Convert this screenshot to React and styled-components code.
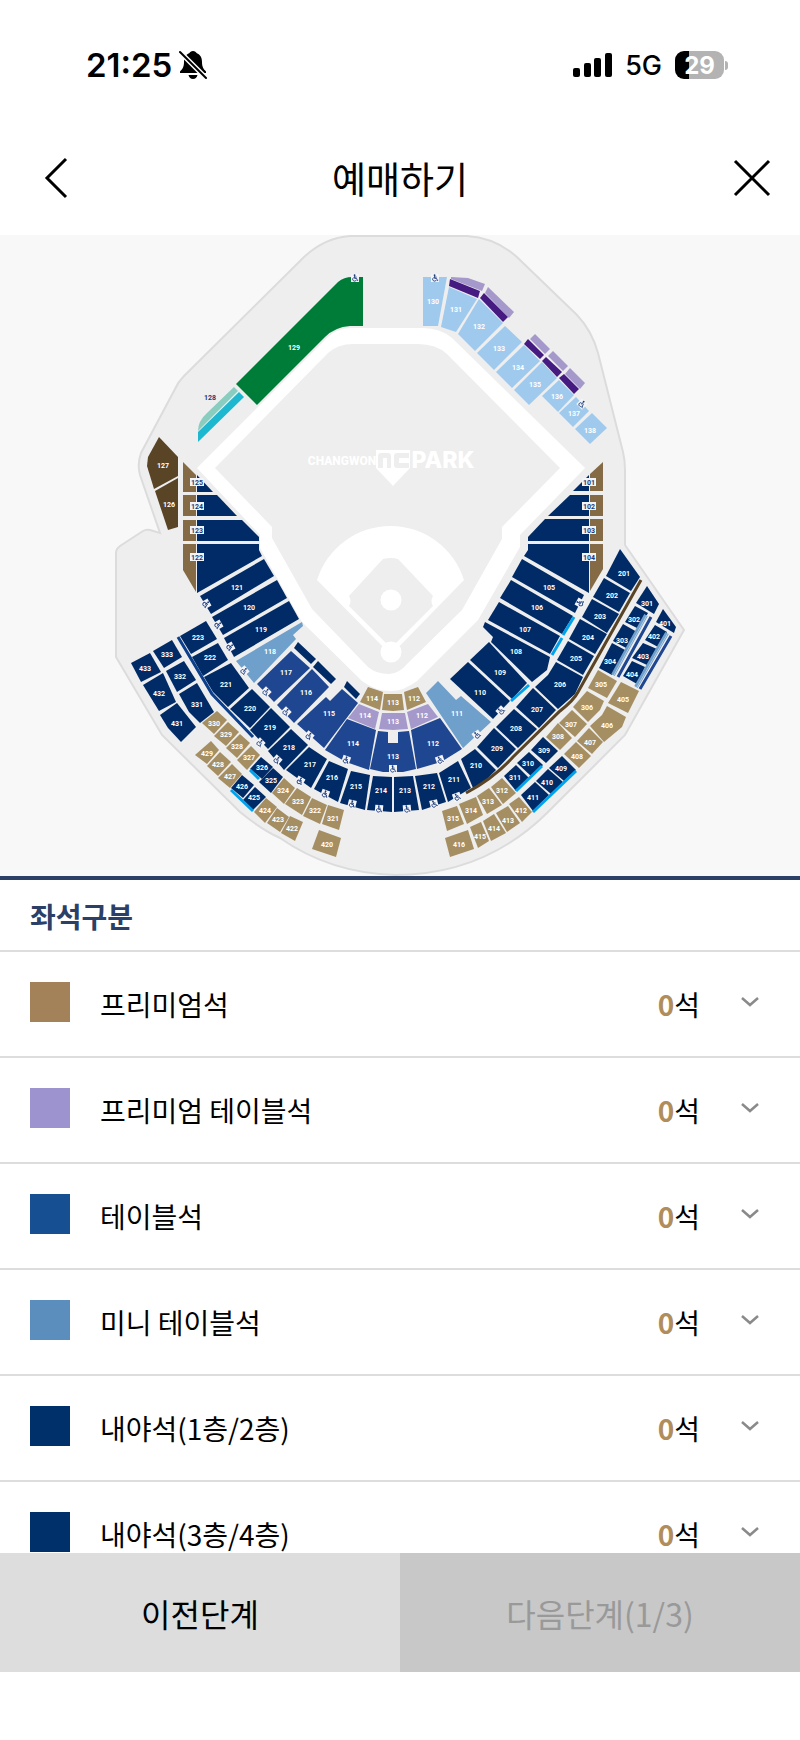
import React, { useState } from 'react';
import styled, { createGlobalStyle } from 'styled-components';

const GlobalStyle = createGlobalStyle`
  * {
    box-sizing: border-box;
  }

  body {
    margin: 0;
    background-color: #fff;
    color: #000;
    font-family: "Noto Sans CJK KR", sans-serif;
  }

  button {
    padding: 0;
    border: none;
    background: none;
    color: inherit;
    font-family: inherit;
    cursor: pointer;
  }
`;

const Page = styled.div`
  display: flex;
  flex-direction: column;
  height: 100vh;
`;

const StatusBar = styled.div`
  display: flex;
  flex-shrink: 0;
  align-items: center;
  justify-content: space-between;
  height: 120px;
  padding: 10px 72px 0 86px;
  font-family: Inter, sans-serif;
`;

const StatusGroup = styled.div`
  display: flex;
  align-items: center;
  gap: ${({ $gap }) => $gap}px;
`;

const Time = styled.span`
  font-size: 33px;
  font-weight: 600;
`;

const Network = styled.span`
  font-size: 27px;
  font-weight: 500;
`;

const Battery = styled.div`
  display: flex;
  align-items: center;
  justify-content: center;
  width: 49px;
  height: 28px;
  border-radius: 9px;
  background: linear-gradient(to right, #000 29%, #b3b3b3 29%);
  color: #fff;
  font-size: 24px;
  font-weight: 700;
`;

const BatteryBox = styled.div`
  display: flex;
  align-items: center;
  gap: 1px;
`;

const BatteryCap = styled.div`
  width: 3px;
  height: 9px;
  border-radius: 0 4px 4px 0;
  background-color: #b3b3b3;
`;

const Header = styled.header`
  display: flex;
  flex-shrink: 0;
  align-items: center;
  justify-content: space-between;
  height: 115px;
  padding: 0 24px;
`;

const Title = styled.h1`
  margin: 0;
  font-size: 37px;
  font-weight: 400;
  line-height: 48px;
`;

const IconButton = styled.button`
  display: flex;
  align-items: center;
  justify-content: center;
  width: 48px;
  height: 48px;
`;

const BackButton = styled(IconButton)`
  justify-content: flex-end;
  padding-right: 4px;
`;

const MapArea = styled.section`
  flex-shrink: 0;
  border-bottom: 4px solid #2c4067;
  background-color: #f8f8f8;
`;

const Stadium = styled.svg`
  display: block;
  width: 100%;

  text {
    font-family: Roboto, sans-serif;
    font-size: 7px;
    font-weight: 700;
    text-anchor: middle;
  }
`;

const LogoText = styled.text`
  && {
    fill: #fff;
    font-family: ${({ $family }) => $family}, sans-serif;
    font-size: ${({ $size }) => $size}px;
    font-weight: 800;
  }
`;

const SectionTitle = styled.h2`
  flex-shrink: 0;
  margin: 0;
  padding: 16px 30px 14px;
  border-bottom: 2px solid #ddd;
  color: #2c4067;
  font-size: 28px;
  font-weight: 700;
  line-height: 40px;
`;

const SeatList = styled.ul`
  flex: 1;
  min-height: 0;
  margin: 0;
  padding: 0;
  overflow-y: auto;
  scrollbar-width: none;
  list-style: none;
`;

const SeatItem = styled.li`
  border-bottom: 2px solid #ddd;
`;

const SeatRow = styled.button`
  display: flex;
  align-items: center;
  width: 100%;
  padding: 30px 40px 34px 30px;
  font-size: 28px;
  line-height: 40px;
  text-align: left;
`;

const Swatch = styled.span`
  width: 40px;
  height: 40px;
  margin-right: 30px;
  background-color: ${({ $color }) => $color};
`;

const SeatName = styled.span`
  flex: 1;
  padding-top: 4px;
  line-height: 36px;
`;

const SeatCount = styled.span`
  margin-right: 40px;
  padding-top: 4px;
  line-height: 36px;

  strong {
    color: #b08d5b;
    font-weight: 700;
  }
`;

const Footer = styled.footer`
  display: grid;
  flex-shrink: 0;
  grid-template-columns: 1fr 1fr;
  padding-bottom: 68px;
`;

const StepButton = styled.button`
  height: 119px;
  background-color: #ddd;
  font-size: 32px;
  font-weight: 400;

  &:disabled {
    background-color: #c8c8c8;
    color: #999;
    cursor: default;
  }
`;

const NAVY = '#002b66';
const BLUE = '#1f4690';
const LIGHT = '#6f9fcb';
const TAN = '#a58e62';
const BROWN = '#856b45';
const DARK_BROWN = '#5a4426';
const LILAC = '#a598ca';
const PURPLE = '#451b82';
const SKY = '#9fcaed';
const CYAN = '#00a2ed';

// [label, label x, label y, points]
const blocks = [
  {
    color: NAVY,
    items: [
      ['121', 237, 587, '264,559 274,576 211,614 200,596'],
      ['120', 249, 607, '277,580 287,598 223,635 212,617'],
      ['119', 261, 629, '289,601 299,619 234,657 224,638'],
      ['', 0, 0, '298,642 316,659 311,664 294,648'],
      ['', 0, 0, '318,661 336,679 331,684 313,667'],
      ['', 0, 0, '347,681 360,694 356,699 344,687'],
      ['', 0, 0, '197,475 213,492 197,492'],
      ['', 0, 0, '197,495 217,495 237,516 197,516'],
      ['', 0, 0, '197,520 242,520 259,537 259,541 197,541'],
      ['', 0, 0, '197,544 259,544 259,550 262,556 197,593'],
      ['', 0, 0, '589,475 589,491 573,491'],
      ['', 0, 0, '570,495 589,495 589,516 548,516'],
      ['', 0, 0, '545,519 589,519 589,541 528,541 528,537'],
      ['', 0, 0, '528,544 589,544 589,593 524,556 528,550'],
      ['105', 549, 587, '522,559 584,595 575,613 512,577'],
      ['106', 537, 607, '511,580 573,616 562,634 500,598'],
      ['107', 525, 629, '499,602 560,636 550,654 488,620'],
      ['108', 516, 651, '485,622 550,657 547,670 532,682 491,642 493,637 483,627'],
      ['109', 500, 672, '489,642 527,683 512,699 470,660'],
      ['110', 480, 692, '468,662 510,701 493,719 450,679'],
      ['201', 624, 573, '620,549 640,577 631,591 606,576'],
      ['202', 612, 595, '604,578 630,593 619,612 593,597'],
      ['203', 600, 616, '592,599 619,614 607,633 582,617'],
      ['204', 588, 637, '580,619 607,634 595,654 569,639'],
      ['205', 576, 658, '568,641 594,656 583,675 557,660'],
      ['206', 560, 684, '556,662 583,677 575,694 558,709 535,687 548,675'],
      ['207', 537, 709, '533,688 556,710 539,728 516,707'],
      ['208', 516, 728, '514,709 537,729 518,748 496,727'],
      ['209', 497, 748, '494,728 516,749 498,768 477,747'],
      ['210', 476, 765, '475,749 496,770 485,781 473,788 461,759'],
      ['211', 454, 779, '458,761 471,788 448,802 439,773'],
      ['212', 429, 786, '437,773 446,802 422,810 415,776'],
      ['213', 405, 790, '413,776 419,810 394,812 394,777'],
      ['214', 381, 790, '373,776 392,777 392,812 367,810'],
      ['215', 356, 786, '351,771 370,775 365,810 340,803'],
      ['216', 332, 777, '329,761 348,769 338,802 314,789'],
      ['217', 310, 764, '309,747 327,759 311,788 286,770'],
      ['218', 289, 747, '291,729 308,745 284,770 268,751'],
      ['219', 270, 727, '271,708 290,727 268,749 250,730'],
      ['220', 250, 708, '252,689 270,707 250,728 230,709'],
      ['221', 226, 684, '231,663 249,688 228,707 213,692 204,677'],
      ['222', 210, 657, '218,643 228,660 203,676 192,657'],
      ['223', 198, 637, '206,621 217,639 191,654 180,636'],
      ['333', 167, 654, '172,640 182,657 164,668 153,651'],
      ['332', 180, 676, '184,661 196,680 177,692 166,671'],
      ['331', 197, 704, '197,683 214,712 200,723 189,712 179,694'],
      ['433', 145, 668, '150,653 161,672 141,682 131,663'],
      ['432', 159, 693, '163,673 176,702 159,711 143,685'],
      ['431', 177, 723, '177,703 196,727 181,742 168,728 160,715'],
      ['326', 262, 767, '261,757 273,767 262,779 250,769'],
      ['325', 271, 780, '273,768 283,777 271,793 259,782'],
      ['426', 242, 786, '242,775 254,785 243,798 231,788'],
      ['425', 254, 797, '255,787 266,797 253,810 243,800'],
      ['301', 647, 603, '647,586 659,604 654,614 636,603'],
      ['302', 634, 619, '635,606 648,613 639,629 625,622'],
      ['303', 622, 640, '623,624 637,632 628,649 613,641'],
      ['304', 610, 661, '612,643 627,651 612,675 599,668'],
      ['401', 665, 623, '663,609 676,627 674,633 656,622'],
      ['402', 654, 636, '655,625 667,632 658,647 645,640'],
      ['403', 643, 656, '643,643 657,649 647,665 632,658'],
      ['404', 632, 674, '632,661 645,667 637,684 623,676'],
      ['309', 544, 750, '543,737 558,751 546,763 531,750'],
      ['310', 528, 763, '529,752 543,765 532,777 517,763'],
      ['311', 515, 777, '516,765 529,778 516,791 504,776'],
      ['409', 561, 768, '562,756 576,770 564,781 549,768'],
      ['410', 547, 782, '548,769 563,782 551,794 536,781'],
      ['411', 533, 797, '535,782 549,795 533,811 521,795'],
    ],
  },
  {
    color: BLUE,
    items: [
      ['117', 286, 672, '291,651 310,668 274,702 257,684'],
      ['116', 306, 692, '312,669 329,687 294,723 277,705'],
      ['115', 329, 713, '326,697 330,701 342,689 358,703 324,748 297,724'],
      ['114', 353, 743, '347,719 376,730 369,770 346,762 325,750'],
      ['113', 393, 756, '378,731 388,732 388,743 398,743 398,732 409,731 416,769 403,772 383,772 370,769'],
      ['112', 433, 743, '411,730 440,718 462,749 441,762 417,769'],
    ],
  },
  {
    color: LIGHT,
    items: [
      ['118', 270, 651, '302,622 303,626 293,635 296,639 254,683 236,661'],
      ['111', 457, 713, '438,681 456,700 461,696 491,722 463,748 426,693'],
    ],
  },
  {
    color: TAN,
    items: [
      ['114', 372, 698, '368,687 383,692 380,710 360,702'],
      ['113', 393, 702, '384,694 402,694 404,710 393,711 382,710'],
      ['112', 414, 698, '404,692 418,687 426,702 407,710'],
      ['330', 214, 723, '217,711 227,720 214,734 202,723'],
      ['329', 226, 734, '228,722 239,732 226,746 214,736'],
      ['328', 237, 746, '240,734 250,743 237,758 226,748'],
      ['327', 249, 757, '251,746 260,755 247,770 237,760'],
      ['324', 283, 790, '284,778 295,788 284,804 272,793'],
      ['323', 298, 801, '297,788 311,797 302,815 285,804'],
      ['322', 315, 810, '312,798 327,805 320,824 303,816'],
      ['321', 333, 818, '328,805 344,810 339,830 322,824'],
      ['429', 207, 753, '211,741 219,750 207,764 195,755'],
      ['428', 218, 764, '220,752 231,762 218,776 207,766'],
      ['427', 230, 776, '232,764 242,774 230,788 218,778'],
      ['424', 265, 810, '266,798 277,807 265,823 254,812'],
      ['423', 278, 819, '277,808 289,817 280,832 267,823'],
      ['422', 292, 828, '290,816 303,822 295,841 281,833'],
      ['420', 327, 844, '319,830 341,838 336,857 312,849'],
      ['305', 601, 684, '598,670 617,681 607,698 588,688'],
      ['306', 587, 707, '587,691 604,701 600,710 588,722 573,707'],
      ['307', 571, 724, '572,710 587,724 575,737 559,723'],
      ['308', 558, 736, '558,723 572,738 560,750 546,737'],
      ['312', 502, 790, '502,778 516,793 503,804 491,787'],
      ['313', 488, 801, '489,788 502,805 487,814 477,796'],
      ['314', 471, 810, '476,797 483,815 467,824 459,804'],
      ['315', 453, 818, '442,811 457,806 464,824 447,831'],
      ['405', 623, 699, '621,682 639,691 628,713 608,703'],
      ['406', 607, 725, '607,706 626,717 622,727 604,742 590,726 602,715'],
      ['407', 590, 742, '589,728 603,742 592,754 577,741'],
      ['408', 577, 756, '576,742 591,756 579,768 564,754'],
      ['412', 521, 810, '519,797 532,812 522,822 509,804'],
      ['413', 508, 820, '508,806 520,823 507,832 496,813'],
      ['414', 494, 828, '494,814 506,833 491,841 483,821'],
      ['415', 480, 836, '481,822 489,841 478,848 470,827'],
      ['416', 459, 844, '445,838 468,830 474,849 450,857'],
    ],
  },
  {
    color: LILAC,
    items: [
      ['114', 365, 715, '359,704 379,712 375,729 348,718'],
      ['113', 393, 721, '382,713 405,713 408,729 393,730 379,729'],
      ['112', 422, 715, '407,712 428,704 438,717 411,729'],
      ['', 0, 0, '451,277 468,278 485,284 482,291 451,279'],
      ['', 0, 0, '488,287 514,312 509,318 485,293'],
      ['', 0, 0, '535,334 550,349 545,354 530,339'],
      ['', 0, 0, '553,351 568,366 563,371 548,356'],
      ['', 0, 0, '570,368 585,383 580,389 565,374'],
    ],
  },
  {
    color: PURPLE,
    items: [
      ['', 0, 0, '450,279 480,291 478,298 449,286'],
      ['', 0, 0, '484,293 508,317 503,322 480,298'],
      ['', 0, 0, '528,339 544,355 540,359 524,344'],
      ['', 0, 0, '546,357 562,372 557,377 542,361'],
      ['', 0, 0, '564,374 579,389 574,394 559,378'],
    ],
  },
  {
    color: SKY,
    items: [
      ['130', 433, 301, '423,277 447,277 438,326 423,326'],
      ['131', 456, 309, '449,287 477,299 456,332 441,327'],
      ['132', 479, 326, '479,299 503,323 475,351 458,334'],
      ['133', 499, 348, '505,326 522,342 494,370 477,353'],
      ['134', 518, 367, '524,345 540,361 512,388 496,372'],
      ['135', 535, 384, '542,362 557,378 529,405 514,390'],
      ['136', 557, 396, '559,380 574,395 558,412 542,396'],
      ['137', 574, 413, '576,397 589,411 573,427 559,413'],
      ['138', 590, 430, '592,413 607,428 590,444 575,429'],
    ],
  },
  {
    color: BROWN,
    items: [
      ['', 0, 0, '183,462 196,475 196,492 183,492'],
      ['', 0, 0, '183,495 196,495 196,516 183,516'],
      ['', 0, 0, '183,520 196,520 196,541 183,541'],
      ['', 0, 0, '183,544 196,544 196,592 183,570'],
      ['', 0, 0, '603,462 603,491 590,491 590,474'],
      ['', 0, 0, '590,495 603,495 603,516 590,516'],
      ['', 0, 0, '590,519 603,519 603,541 590,541'],
      ['', 0, 0, '590,544 603,544 603,569 590,591'],
    ],
  },
  {
    color: DARK_BROWN,
    items: [
      ['127', 163, 465, '159,437 178,457 178,476 154,489 147,466 148,457'],
      ['126', 169, 504, '178,478 178,527 168,530 155,491'],
    ],
  },
];

// numbers printed in navy on a pale plate
const plates = [
  ['125', 197, 482],
  ['124', 197, 506],
  ['123', 197, 530],
  ['122', 197, 557],
  ['101', 589, 482],
  ['102', 589, 506],
  ['103', 589, 530],
  ['104', 589, 557],
];

// [x, y, rotation]
const wheelchairs = [
  [355, 278, 0],
  [435, 278, 0],
  [582, 404, 45],
  [206, 604, 60],
  [218, 625, 60],
  [230, 647, 60],
  [244, 671, 50],
  [266, 692, 45],
  [286, 712, 45],
  [309, 736, 40],
  [346, 760, 20],
  [393, 769, 0],
  [260, 743, 45],
  [277, 760, 42],
  [300, 781, 30],
  [325, 794, 20],
  [352, 804, 14],
  [379, 809, 5],
  [407, 809, -5],
  [434, 804, -14],
  [457, 797, -20],
  [440, 760, -20],
  [477, 735, -35],
  [501, 711, -45],
  [580, 603, -60],
];

const seatTypes = [
  { name: '프리미엄석', color: '#a38259' },
  { name: '프리미엄 테이블석', color: '#9d94cf' },
  { name: '테이블석', color: '#174f93' },
  { name: '미니 테이블석', color: '#5b8ebc' },
  { name: '내야석(1층/2층)', color: '#003069' },
  { name: '내야석(3층/4층)', color: '#003069' },
];

function Wheelchair({ x, y, angle }) {
  return (
    <g transform={`translate(${x} ${y}) rotate(${angle})`}>
      <rect x="-4" y="-4" width="8" height="8" fill="#f3f4f7" />
      <circle cx="-0.4" cy="-2.8" r="0.9" fill="#1c3a7c" />
      <path
        d="M-0.4 -2V0.4H1.6L2.4 2.6L3.2 2.3M-0.4 -0.9H1.6M-1.4 -0.4A1.9 1.9 0 1 0 1.3 2"
        fill="none"
        stroke="#1c3a7c"
        strokeWidth="0.9"
      />
    </g>
  );
}

function StadiumMap() {
  return (
    <Stadium viewBox="0 235 800 641" role="img" aria-label="창원NC파크 좌석 배치도">
      <path
        d="M350 236H467Q498 238 520 260L577 315Q592 331 598 353L623 452Q625 460 625 470V545L684 630L625 735L547 813Q484 875 395 875Q330 873 280 838Q262 830 240 812L162 735L116 657V553Q116 549 120 546L143 531Q146 529 150 530L160 533L140 475Q137 464 141 453L175 389Q178 382 184 376L300 261Q322 238 350 236Z"
        fill="#eee"
        stroke="#dcdcdc"
        strokeWidth="2"
      />

      {/* warning track, outfield, infield */}
      <path
        d="M197 468L328 337Q337 328 352 328H423Q440 328 452 338L585 468L520 535V547L478 620L417 681Q404 691 391 691Q375 691 362 681L302 622L260 548V535Z"
        fill="#fff"
      />
      <path
        d="M215 468L328 353Q338 344 353 344H418Q436 344 447 354L560 468L502 527V539L462 610L408 663Q399 674 389 674Q376 674 368 667L312 609L272 538V527Z"
        fill="#eee"
      />
      <path d="M317 580A77 77 0 0 1 464 580L391 655Z" fill="#fff" />
      <path
        d="M383 559Q391 557 398 559L433 596Q430 601 433 606L391 648L349 606Q352 601 349 596Z"
        fill="#eee"
      />
      <circle cx="391" cy="600" r="10.5" fill="#fff" />
      <circle cx="391" cy="652" r="10.5" fill="#fff" />

      <LogoText $family="Roboto" $size={12} x="342" y="465">
        CHANGWON
      </LogoText>
      <path d="M376 450H410V468L393 486L376 468Z" fill="#fff" />
      <path
        d="M378 468V456Q378 453 381 453H388Q391 453 391 456V468H387V458H383V468ZM394 456Q394 453 397 453H409V458H399V463H409V468H397Q394 468 394 465Z"
        fill="#eee"
      />
      <LogoText $family="Inter" $size={23} x="443" y="468">
        PARK
      </LogoText>

      <path
        d="M236 384L338 282Q344 277 352 277H363V326H350Q335 327 325 337L257 405Z"
        fill="#007c39"
      />
      <text x="294" y="350" fill="#fff">
        129
      </text>
      <path d="M234 387L238 391L198 431Q198 421 207 413Z" fill="#88cdc0" />
      <path d="M239 392L244 397L198 442V432Z" fill="#1db7cf" />
      <text x="210" y="400" fill="#1c3a7c">
        128
      </text>

      {blocks.map(({ color, items }) => (
        <g key={color} fill={color}>
          {items.map(([, , , points]) => (
            <polygon key={points} points={points} />
          ))}
        </g>
      ))}

      <g fill="none" strokeWidth="3">
        <path d="M641 580L578 692Q574 700 560 711L513 757Q494 778 466 793" stroke={DARK_BROWN} />
        <path d="M178 637L212 694L253 737" stroke="#0b3f8c" />
        <path
          d="M574 617L563 635M562 638L552 655M529 685L511 701M250 770L259 779M231 790L253 811M542 766L516 791M576 771L533 812"
          stroke={CYAN}
        />
        <path d="M651 617L618 677M671 636L640 689" stroke={BLUE} />
        <path d="M646 615L613 675M667 633L636 687" stroke={LIGHT} strokeWidth="4" />
        <path d="M647 615L614 675M668 633L637 687" stroke="#dce6f0" strokeWidth="0.6" />
      </g>

      {wheelchairs.map(([x, y, angle]) => (
        <Wheelchair key={`${x}-${y}`} x={x} y={y} angle={angle} />
      ))}

      <g fill="#fff">
        {blocks.map(({ items }) =>
          items
            .filter(([label]) => label)
            .map(([label, x, y, points]) => (
              <text key={points} x={x} y={y + 3}>
                {label}
              </text>
            ))
        )}
      </g>

      {plates.map(([label, x, y]) => (
        <g key={label}>
          <rect x={x - 7} y={y - 4} width="14" height="8" fill="#f3f4f7" />
          <text x={x} y={y + 3} fill="#1c3a7c">
            {label}
          </text>
        </g>
      ))}
    </Stadium>
  );
}

function App() {
  const [opened, setOpened] = useState(null);

  return (
    <Page>
      <GlobalStyle />
      <StatusBar>
        <StatusGroup $gap={7}>
          <Time>21:25</Time>
          <svg width="28" height="30" viewBox="0 0 28 30" aria-hidden="true">
            <path
              d="M14 1C16 1 17 2 17.500 3C21.500 4.500 23 8 23 12C23 17 24.500 19 27 21.500V23H1V21.500C3.500 19 5 17 5 12C5 8 6.500 4.500 10.500 3C11 2 12 1 14 1Z"
              fill="#000"
            />
            <path d="M9.500 25H18.500Q17.500 29 14 29Q10.500 29 9.500 25Z" fill="#000" />
            <path d="M0 1L28 29" stroke="#fff" strokeWidth="5" />
            <path d="M1 2L27 28" stroke="#000" strokeWidth="2" strokeLinecap="round" />
          </svg>
        </StatusGroup>
        <StatusGroup $gap={13}>
          <svg width="39" height="25" viewBox="0 0 39 25" aria-hidden="true">
            <rect x="0" y="15" width="7" height="9" rx="2" />
            <rect x="11" y="10" width="7" height="14" rx="2" />
            <rect x="21" y="5" width="7" height="19" rx="2" />
            <rect x="32" y="0" width="7" height="24" rx="2" />
          </svg>
          <Network>5G</Network>
          <BatteryBox>
            <Battery>29</Battery>
            <BatteryCap />
          </BatteryBox>
        </StatusGroup>
      </StatusBar>

      <Header>
        <BackButton type="button" aria-label="뒤로">
          <svg width="24" height="42" viewBox="0 0 24 42" fill="none" stroke="#000" strokeWidth="3">
            <path d="M22 2L3 21L22 40" />
          </svg>
        </BackButton>
        <Title>예매하기</Title>
        <IconButton type="button" aria-label="닫기">
          <svg width="38" height="38" viewBox="0 0 38 38" fill="none" stroke="#000" strokeWidth="3">
            <path d="M2 2L36 36M36 2L2 36" />
          </svg>
        </IconButton>
      </Header>

      <MapArea>
        <StadiumMap />
      </MapArea>

      <SectionTitle>좌석구분</SectionTitle>
      <SeatList>
        {seatTypes.map(({ name, color }) => (
          <SeatItem key={name}>
            <SeatRow
              type="button"
              aria-expanded={opened === name}
              onClick={() => setOpened(opened === name ? null : name)}
            >
              <Swatch $color={color} />
              <SeatName>{name}</SeatName>
              <SeatCount>
                <strong>0</strong>석
              </SeatCount>
              <svg width="20" height="12" viewBox="0 0 20 12" fill="none" stroke="#8a8a8a" strokeWidth="2.500">
                <path d="M2 2L10 9L18 2" />
              </svg>
            </SeatRow>
          </SeatItem>
        ))}
      </SeatList>

      <Footer>
        <StepButton type="button">이전단계</StepButton>
        <StepButton type="button" disabled>
          다음단계(1/3)
        </StepButton>
      </Footer>
    </Page>
  );
}

export default App;
